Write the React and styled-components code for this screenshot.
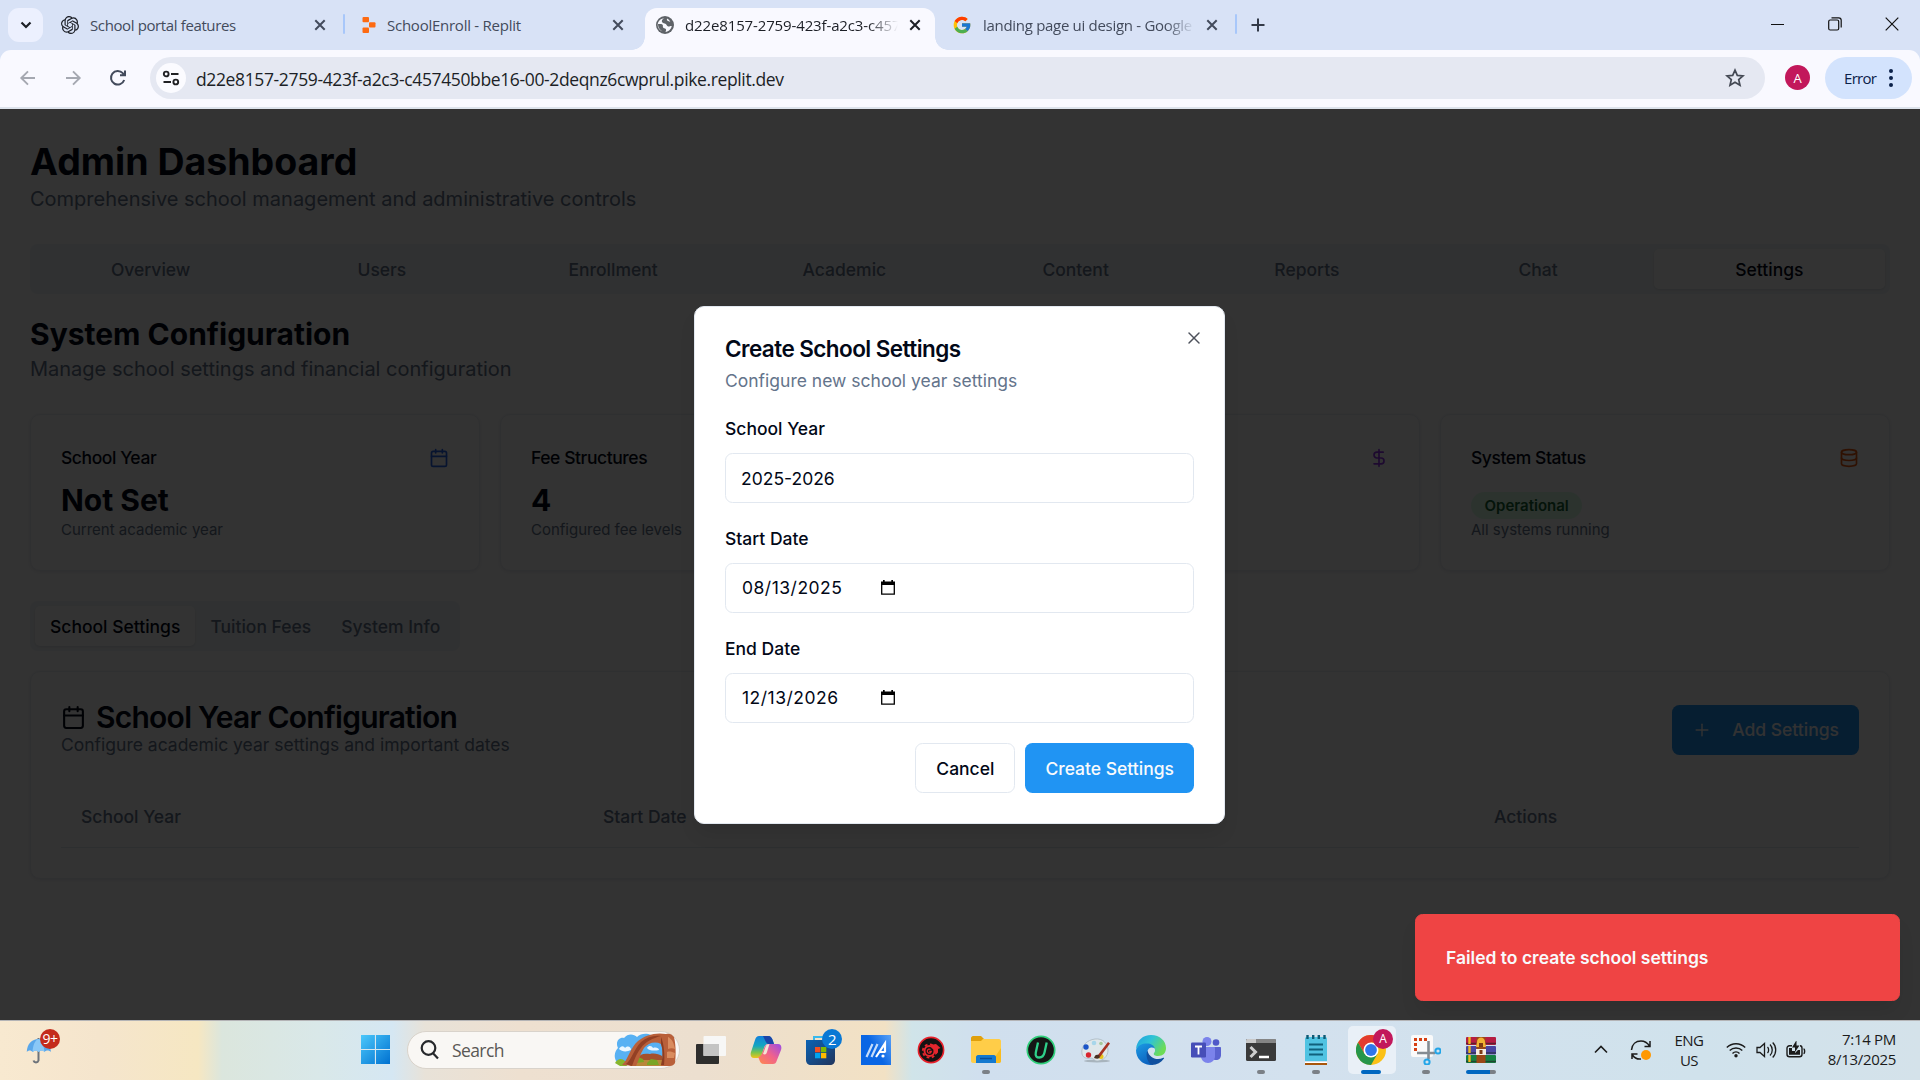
import React from "react";
import styled, { createGlobalStyle, css } from "styled-components";
import { Calendar, DollarSign, Database, Plus, X } from "lucide-react";
import { SiOpenai } from "react-icons/si";
import { FcGoogle } from "react-icons/fc";

const GlobalStyle = createGlobalStyle`
  *, *::before, *::after { box-sizing: border-box; }
  body { margin: 0; overflow: hidden; }
  h1, h2, h3, p { margin: 0; font-weight: inherit; }
  button { font: inherit; border: 0; padding: 0; background: none; color: inherit; }
  svg { display: block; flex: none; }
`;

const system = `"Open Sans", "Noto Sans", sans-serif`;

const Desktop = styled.div`
  width: 1920px;
  height: 1080px;
  display: flex;
  flex-direction: column;
  overflow: hidden;
  font-family: Inter, "Liberation Sans", sans-serif;
`;

/* ---------- browser chrome ---------- */

const TabStrip = styled.header`
  height: 50px;
  flex: none;
  display: flex;
  align-items: flex-end;
  background: #d8e2f6;
  font-family: ${system};
`;

const TabSearch = styled.button`
  width: 35px;
  height: 34px;
  margin: 0 7px 8px 8px;
  border-radius: 11px;
  background: #ecf0fe;
  display: grid;
  place-items: center;
`;

const Tab = styled.div`
  position: relative;
  height: 42px;
  padding: 0 ${(p) => p.$right || 11}px 8px ${(p) => p.$left || 11}px;
  width: ${(p) => p.$width}px;
  display: flex;
  align-items: center;
  gap: 11px;
  font-size: 15px;
  color: ${(p) => (p.$active ? "#1c1f26" : "#434b5c")};
  ${(p) =>
    p.$active &&
    css`
      margin-left: 10px;
      background: #f9f9ff;
      border-radius: 12px 12px 0 0;
      &::before,
      &::after {
        content: "";
        position: absolute;
        bottom: 0;
        width: 13px;
        height: 13px;
      }
      &::before {
        left: -13px;
        background: radial-gradient(circle at 0 0, transparent 12.5px, #f9f9ff 13px);
      }
      &::after {
        right: -13px;
        background: radial-gradient(circle at 100% 0, transparent 12.5px, #f9f9ff 13px);
      }
    `}
`;

const TabLabel = styled.span`
  flex: 1;
  min-width: 0;
  white-space: nowrap;
  letter-spacing: ${(p) => p.$track || 0}px;
  ${(p) =>
    p.$fade &&
    css`
      mask-image: linear-gradient(90deg, #000 calc(100% - 30px), transparent);
    `}
`;

const Divider = styled.span`
  width: 2px;
  height: 20px;
  margin: 0 ${(p) => p.$right}px 16px ${(p) => p.$left}px;
  border-radius: 1px;
  background: #a8c7fa;
`;

const NewTab = styled.button`
  margin: 0 0 18px 14px;
`;

const WindowButtons = styled.div`
  margin-left: auto;
  height: 50px;
  display: flex;
`;

const WindowButton = styled.button`
  width: 57px;
  height: 48px;
  display: grid;
  place-items: center;
`;

const ToolbarBack = styled.div`
  background: #d8e2f6;
  flex: none;
`;

const Toolbar = styled.div`
  height: 59px;
  padding: 0 8px 2px 18px;
  display: flex;
  align-items: center;
  background: #f9f9ff;
  border-radius: 11px 11px 0 0;
  border-bottom: 2px solid #dde3ec;
  font-family: ${system};
`;

const NavButtons = styled.div`
  width: 132px;
  display: flex;
  gap: 25px;
`;

const Omnibox = styled.div`
  width: 1615px;
  height: 42px;
  padding: 0 20px 0 6px;
  border-radius: 21px;
  background: #e5e8f2;
  display: flex;
  align-items: center;
`;

const SiteInfo = styled.span`
  width: 30px;
  height: 30px;
  border-radius: 50%;
  background: #fbfbff;
  display: grid;
  place-items: center;
`;

const Url = styled.span`
  flex: 1;
  margin-left: 10px;
  padding-top: 2px;
  font-size: 17.5px;
  letter-spacing: -0.37px;
  color: #1c1f26;
`;

const Profile = styled.span`
  width: 25px;
  height: 25px;
  margin: 0 15px 0 20px;
  border-radius: 50%;
  background: #c2185b;
  color: #fff;
  font-size: 13px;
  display: grid;
  place-items: center;
`;

const ErrorPill = styled.button`
  width: 87px;
  height: 42px;
  padding: 0 19px 0 19px;
  border-radius: 21px;
  background: #d3e3fd;
  color: #0b2149;
  font-size: 15px;
  letter-spacing: -0.7px;
  display: flex;
  align-items: center;
  justify-content: space-between;
`;

/* ---------- web page ---------- */

const Viewport = styled.main`
  position: relative;
  height: 911px;
  flex: none;
  padding: 30px;
  overflow: hidden;
  background: #fcfcfd;
  color: #020817;
`;

const PageTitle = styled.h1`
  font-size: 37.5px;
  line-height: 45px;
  font-weight: 700;
`;

const SectionTitle = styled.h2`
  font-size: 30px;
  line-height: 40px;
  font-weight: 700;
`;

const Lead = styled.p`
  font-size: 20px;
  line-height: 30px;
  color: #64748b;
`;

const MainTabs = styled.nav`
  height: 50px;
  margin: 30px 0 20px;
  padding: 5px;
  display: grid;
  grid-template-columns: repeat(8, 1fr);
  border-radius: 7.5px;
  background: #f1f5f9;
`;

const TabTrigger = styled.button`
  height: 40px;
  padding: 0 15px;
  border-radius: 5px;
  font-size: 17.5px;
  font-weight: 500;
  color: ${(p) => (p.$active ? "#020817" : "#64748b")};
  background: ${(p) => (p.$active ? "#fff" : "transparent")};
  box-shadow: ${(p) => (p.$active ? "0 1px 3px rgba(0,0,0,.1)" : "none")};
`;

const StatGrid = styled.section`
  margin: 30px 0;
  display: grid;
  grid-template-columns: repeat(4, 1fr);
  gap: 20px;
`;

const Card = styled.article`
  padding: 30px;
  min-height: ${(p) => p.$height}px;
  border: 1px solid #ecf0f5;
  border-radius: 10px;
  background: #fdfdfe;
  box-shadow: 0 1px 3px rgba(0, 0, 0, 0.07);
`;

const CardHead = styled.div`
  display: flex;
  height: 25px;
  margin-bottom: 10px;
  align-items: center;
  justify-content: space-between;
  font-size: 17.5px;
  font-weight: 500;
  color: #020817;
  letter-spacing: -0.43px;
`;

const CardValue = styled.div`
  height: 40px;
  font-size: 30px;
  line-height: 40px;
  font-weight: 700;
  display: flex;
  align-items: flex-end;
`;

const CardNote = styled.p`
  font-size: 15px;
  line-height: 20px;
  color: #64748b;
`;

const Badge = styled.span`
  margin-bottom: 1px;
  padding: 3.5px 13.5px;
  border-radius: 14px;
  font-size: 15px;
  line-height: 20px;
  font-weight: 600;
  background: #dcfce7;
  color: #166534;
`;

const SubTabs = styled.nav`
  width: max-content;
  height: 50px;
  padding: 5px;
  margin-bottom: 20px;
  display: flex;
  border-radius: 7.5px;
  background: #f1f5f9;
`;

const ConfigHead = styled.div`
  display: flex;
  align-items: center;
  justify-content: space-between;
  margin-bottom: 30px;
`;

const ConfigTitle = styled.h3`
  display: flex;
  align-items: center;
  gap: 10px;
  font-size: 30px;
  line-height: 30px;
  font-weight: 600;
  letter-spacing: -0.75px;
`;

const ConfigText = styled.p`
  font-size: 17.5px;
  line-height: 25px;
  color: #64748b;
`;

const Button = styled.button`
  height: 50px;
  padding: 0 20px;
  display: flex;
  align-items: center;
  gap: 20px;
  border-radius: 7.5px;
  font-size: 17.5px;
  font-weight: 500;
  color: ${(p) => (p.$outline ? "#020817" : "#f8fafc")};
  background: ${(p) => (p.$outline ? "#fff" : "#2094f3")};
  border: ${(p) => (p.$outline ? "1px solid #e2e8f0" : "0")};
`;

const TableHead = styled.div`
  height: 61px;
  padding-bottom: 2px;
  display: grid;
  grid-template-columns: 522px 465px 426px 1fr;
  align-items: center;
  border-bottom: 1px solid #e2e8f0;
  font-size: 17.5px;
  font-weight: 500;
  color: #64748b;
`;

const HeadCell = styled.span`
  padding: 0 20px;
`;

const Overlay = styled.div`
  position: absolute;
  inset: 0;
  padding: 1px 1px 0 0;
  display: grid;
  place-items: center;
  background: rgba(0, 0, 0, 0.8);
`;

const Dialog = styled.section`
  position: relative;
  width: 531px;
  height: 518px;
  padding: 31px 30px 30px;
  display: flex;
  flex-direction: column;
  gap: 20px;
  border: 1px solid #e2e8f0;
  border-radius: 10px;
  background: #fff;
  box-shadow: 0 12px 19px -4px rgba(0, 0, 0, 0.1);
`;

const DialogClose = styled.button`
  position: absolute;
  top: 21px;
  right: 20px;
  opacity: 0.7;
`;

const DialogTitle = styled.h2`
  margin-bottom: 7.5px;
  font-size: 22.5px;
  line-height: 22.5px;
  font-weight: 600;
  letter-spacing: -0.56px;
`;

const Field = styled.label`
  display: flex;
  flex-direction: column;
  gap: 10px;
`;

const FieldLabel = styled.span`
  height: 30px;
  padding-top: 1px;
  font-size: 17.5px;
  line-height: 30px;
  font-weight: 500;
`;

const Control = styled.span`
  height: 50px;
  padding: 0 15px ${(p) => (p.$date ? 2 : 0)}px;
  display: flex;
  align-items: center;
  border: 1px solid #e2e8f0;
  border-radius: 7.5px;
  font-size: 17.5px;
`;

const DateText = styled.span`
  width: 139px;
  padding-left: 1px;
  letter-spacing: 0.5px;
`;

const DialogFooter = styled.footer`
  display: flex;
  justify-content: flex-end;
  gap: 10px;
`;

const Toast = styled.div`
  position: absolute;
  right: 20px;
  bottom: 19px;
  width: 485px;
  height: 87px;
  padding: 30px;
  border: 1px solid #ef4444;
  border-radius: 7.5px;
  background: #ef4444;
  color: #f8fafc;
  font-size: 17.5px;
  line-height: 25px;
  font-weight: 600;
  box-shadow: 0 12px 19px -4px rgba(0, 0, 0, 0.1);
`;

/* ---------- taskbar ---------- */

const Taskbar = styled.footer`
  height: 60px;
  flex: none;
  padding-bottom: 2px;
  display: flex;
  align-items: center;
  border-top: 1px solid #b4b4b6;
  background: linear-gradient(
    90deg,
    #f8e9d0 0,
    #f5e5cd 100px,
    #f6e7c2 198px,
    #dbe6dd 222px,
    #d9e8e9 320px,
    #d5e7f3 392px,
    #e8e2d8 425px,
    #eee0d0 520px,
    #ecdfcf 700px,
    #f2e1c4 885px,
    #d0e4e9 912px,
    #d0dfee 980px,
    #d3e1ee 1300px,
    #d0e2ec 1700px,
    #d4e2ea 1920px
  );
  font-family: ${system};
  color: #1b1b1b;
`;

const Widgets = styled.div`
  position: relative;
  width: 361px;
  height: 30px;
  padding-left: 26px;
`;

const CountBadge = styled.span`
  position: absolute;
  left: ${(p) => p.$left}px;
  top: ${(p) => p.$top}px;
  width: 20px;
  height: 20px;
  border-radius: 50%;
  background: ${(p) => p.$color};
  color: #fff;
  font-size: ${(p) => p.$size || 14}px;
  line-height: 20px;
  text-align: center;
  letter-spacing: -0.5px;
`;

const SearchBox = styled.div`
  width: 273px;
  height: 38px;
  margin: 0 3px 0 17px;
  padding: 0 3px 0 12px;
  display: flex;
  align-items: center;
  gap: 13px;
  border-radius: 19px;
  background: #f9f7f4;
  border: 1px solid #d9d3cb;
  font-size: 17.5px;
  color: #5a5855;
`;

const SearchText = styled.span`
  flex: 1;
  letter-spacing: -0.6px;
`;

const AppSlot = styled.div`
  position: relative;
  width: 55.07px;
  height: 60px;
  display: grid;
  place-items: center;
  &::before {
    content: "";
    position: absolute;
    inset: 6px 3px 6px 4px;
    border-radius: 5px;
    background: ${(p) => (p.$focused ? "#e9f0f7" : "transparent")};
  }
  & > svg {
    position: relative;
  }
`;

const RunMark = styled.i`
  position: absolute;
  bottom: 6px;
  left: calc(50% - ${(p) => p.$width / 2}px);
  width: ${(p) => p.$width}px;
  height: 4px;
  border-radius: 2px;
  background: ${(p) => {
    if (p.$width > 25) return "linear-gradient(90deg, #0067c0 24px, #7b8086 24px)";
    return p.$width > 10 ? "#0067c0" : "#7b8086";
  }};
`;

const Tray = styled.div`
  margin-left: auto;
  padding-right: 24px;
  display: flex;
  align-items: center;
  font-size: 15px;
  line-height: 20px;
`;

const TrayItem = styled.span`
  margin-left: ${(p) => p.$left}px;
`;

const Language = styled.span`
  width: 32px;
  margin-left: 21px;
  text-align: center;
  letter-spacing: -0.5px;
`;

const Clock = styled.time`
  width: 76px;
  margin-left: 14px;
  padding-bottom: 2px;
  white-space: nowrap;
  display: flex;
  flex-direction: column;
  align-items: flex-end;
  letter-spacing: -0.3px;
`;

/* ---------- drawings ---------- */

const CloseGlyph = ({ color = "#434b5c" }) => (
  <svg width="12" height="12" viewBox="0 0 12 12" stroke={color} strokeWidth="2">
    <path d="M1.3 1.3 10.7 10.7M10.7 1.3 1.3 10.7" />
  </svg>
);

const ReplitMark = () => (
  <svg width="14" height="18" viewBox="0 0 14 18" fill="#fd6a12">
    <rect x="0.5" y="1" width="6.5" height="5.3" rx="1" />
    <rect x="7" y="6.3" width="6.5" height="5.3" rx="1" />
    <rect x="0.5" y="11.6" width="6.5" height="5.3" rx="1" />
  </svg>
);

const Globe = () => (
  <svg width="18" height="18" viewBox="0 0 18 18">
    <circle cx="9" cy="9" r="9" fill="#5f6368" />
    <path
      d="M8.500 2.200C6 3 5.500 4.500 6 6c.8 1.500 2.500 1.300 3.800 2 1.200.8 1 2.200 2.400 2.500 1.300.2 2-.7 3.600-.5-.6 3-3 5.600-6.300 6 .3-1.200 1-2 .3-3-.8-1-2.300-.6-2.800-1.800-.5-1.300.4-2-.7-2.700C5 7.800 3.500 8.300 2 8 1.900 11 3.500 14 6.500 15.500 4 14.500 1.500 12 1.700 8.500 2 5 5 2.200 8.500 2.200Z"
      fill="#f9f9ff"
    />
    <path d="M11 2.500c-.5 1.500.3 2.500 1.800 2.700 1 .1 1.300.6 1.700 1.300-.6-1.800-1.800-3.200-3.500-4Z" fill="#f9f9ff" />
  </svg>
);

const Tune = () => (
  <svg width="18" height="18" viewBox="0 0 18 18" fill="none" stroke="#202124" strokeWidth="1.9">
    <circle cx="4.200" cy="5" r="2.400" />
    <path d="M9 5h7.500M1.500 13H9" />
    <circle cx="13.800" cy="13" r="2.400" />
  </svg>
);

const Umbrella = () => (
  <svg width="28" height="30" viewBox="0 0 28 30">
    <path d="M12.500 3v1.500M12.500 15v10.500a2.600 2.600 0 0 1-5 0" fill="none" stroke="#6d737b" strokeWidth="2" />
    <path d="M.8 17C1 9 6 4 12.500 4S24.500 9 25 17c-2-2-5-2-6.500 0-1.500-2-4-2-6 0-1.500-2-4-2-6 0-1.500-2-4-2-5.700 0Z" fill="#5aa7ea" />
    <path d="M6.500 17C7 10 9 5 12.500 4c3 1 5.500 6 6 13-1.500-2-4-2-6 0-1.500-2-4-2-6 0Z" fill="#8ac8f7" />
  </svg>
);

const WindowsLogo = () => (
  <svg width="29" height="29" viewBox="0 0 29 29">
    <defs>
      <linearGradient id="win" x1="0" y1="0" x2="1" y2="1" gradientUnits="objectBoundingBox">
        <stop offset="0" stopColor="#4bc8fb" />
        <stop offset="1" stopColor="#0071d0" />
      </linearGradient>
      <mask id="panes">
        <path d="M0 0h13.900v13.900H0zM15 0h14v13.900H15zM0 15h13.900v14H0zM15 15h14v14H15z" fill="#fff" />
      </mask>
    </defs>
    <rect width="29" height="29" fill="url(#win)" mask="url(#panes)" />
  </svg>
);

const ArchScene = () => (
  <svg width="62" height="34" viewBox="0 0 62 34">
    <path d="M2 28C-1 22 2 17 4 15 1 9 5 4 10 5 14 0 20 1 23 4 27 0 33 0 37 2L50 4V32H8Z" fill="#58b1f3" />
    <path d="M5 16c2-4 5-3 6-1 3-3 6-1 6 2-4 2-9 2-12-1ZM33 15c2-3 5-2 6 0 3-1 6 0 6 2-4 1-10 1-12-2Z" fill="#eaf6ff" />
    <path d="M1 30c3-5 7-5 10-2l2 5H6Z" fill="#86b52d" />
    <path d="M15 33c8-7 22-8 34-7v7Z" fill="#b9873a" />
    <path d="M24 25c2-4 6-5 12-4 4-1 9 0 12 2v4H24Z" fill="#a4502d" />
    <path d="M21 28l3-4 5 2 1 3-8 1ZM33 30l4-4 6 1 2 5H33Z" fill="#7aa526" />
    <path
      d="M8 32C14 27 16 15 24 8 31 2 42-1 52 1c3-1 6 0 8 3 2 8 2 18 1 26-1 2-3 3-5 3H47c2-8 2-16 0-22-6-3-13-1-17 4-4 6-5 12-8 18Z"
      fill="#b9603a"
    />
    <path d="M12 31C18 26 20 16 27 9 33 4 40 2 47 3 39 5 31 9 27 15 22 21 20 28 18 33Z" fill="#934024" />
    <path d="M47 4c3 7 4 18 3 28h-3c2-8 2-16 0-21Z" fill="#8b3d22" />
    <path d="M54 4c4 2 6 6 7 12-2-1-5-1-7 0ZM53 19c3-1 5 0 8 1l-1 5h-7Z" fill="#d98c5f" />
  </svg>
);

const TaskView = () => (
  <svg width="30" height="30" viewBox="0 0 30 30">
    <rect x="0" y="9" width="23" height="20" rx="1" fill="#2e2e2d" />
    <rect x="7.500" y="1" width="22.500" height="20" rx="1" fill="#f7f7f6" />
    <rect x="7.500" y="9" width="15.500" height="12" fill="#c4c4c3" />
  </svg>
);

const Copilot = () => (
  <svg width="32" height="30" viewBox="0 0 32 30">
    <defs>
      <linearGradient id="cpA" x1="0" y1="0" x2="0" y2="1">
        <stop offset="0" stopColor="#1380dc" />
        <stop offset=".45" stopColor="#13a6c0" />
        <stop offset=".75" stopColor="#7cc44c" />
        <stop offset="1" stopColor="#f2c419" />
      </linearGradient>
      <linearGradient id="cpB" x1="1" y1="0" x2="0" y2="1">
        <stop offset="0" stopColor="#9b4be6" />
        <stop offset=".5" stopColor="#f0628c" />
        <stop offset="1" stopColor="#ff8a4c" />
      </linearGradient>
    </defs>
    <path d="M9 1h9c3 0 4 2 5 5l1 3h-6c-2 0-3 1-4 4l-2 6c-1 3-2 4-5 4H4c-3 0-4-3-3-6L5 5C6 2 7 1 9 1Z" fill="url(#cpA)" />
    <path d="M13 1h5c3 0 4 2 5 5l1 3h-6c-2-1-3-4-5-8Z" fill="#1b45a8" />
    <path d="M23 29h-9c-3 0-4-2-5-5l-.8-2c2-.4 3-1.500 4-4l2-5c1-3 2-4 4.500-4H28c3 0 4 3 3 6l-4 10c-1 3-2 4-4 4Z" fill="url(#cpB)" />
    <path d="m13 19 2.500-7c.6-1.800 1.500-3 4-3l-2.500 8c-.6 2-1.500 3-4 2Z" fill="#f6e3d3" />
  </svg>
);

const Store = () => (
  <svg width="30" height="30" viewBox="0 0 30 30">
    <defs>
      <linearGradient id="bag" x1="0" y1="0" x2="1" y2="1">
        <stop offset="0" stopColor="#0b63b4" />
        <stop offset="1" stopColor="#21345c" />
      </linearGradient>
    </defs>
    <path d="M8 7V2h14v5" fill="none" stroke="#39b9ec" strokeWidth="2" />
    <path d="M0 5h29v20c0 3-2 5-5 5H5c-3 0-5-2-5-5Z" fill="url(#bag)" />
    <path d="M9 12h5.300v5.300H9z" fill="#f25022" />
    <path d="M15 12h5.300v5.300H15z" fill="#7fba00" />
    <path d="M9 18h5.300v5.300H9z" fill="#00a4ef" />
    <path d="M15 18h5.300v5.300H15z" fill="#ffb900" />
  </svg>
);

const MyAsus = () => (
  <svg width="30" height="30" viewBox="0 0 30 30">
    <defs>
      <linearGradient id="asus" x1="1" y1="0" x2="0" y2=".6">
        <stop offset="0" stopColor="#5aa2f7" />
        <stop offset=".6" stopColor="#0a66e4" />
      </linearGradient>
    </defs>
    <path d="M0 0h30v30H0z" fill="url(#asus)" />
    <path d="m5.500 22 6-13M10.500 22l6-13" stroke="#c4dcfb" strokeWidth="2.200" />
    <path d="m15 22 9-13.500v9M19 17h5" fill="none" stroke="#fff" strokeWidth="2.200" />
    <circle cx="22" cy="21" r="1.600" fill="#fff" />
  </svg>
);

const RedGear = () => (
  <svg width="28" height="28" viewBox="0 0 28 28">
    <circle cx="14" cy="14" r="12.600" fill="#141313" stroke="#e8202a" strokeWidth="1.600" />
    <circle cx="12.500" cy="15" r="5" fill="none" stroke="#e5262e" strokeWidth="2" />
    <circle cx="12.500" cy="15" r="6.700" fill="none" stroke="#e5262e" strokeWidth="1.800" strokeDasharray="2.800 2.500" />
    <path d="M13.500 13.500a2 2 0 1 0 .8 2h-2" fill="none" stroke="#e5262e" strokeWidth="1.300" />
    <path d="m14 9 2-.5 3-.5 4.500 4-2.500 1v3.500l-2.500 2.500-1-5-3-2Z" fill="#e5262e" />
  </svg>
);

const Explorer = () => (
  <svg width="30" height="28" viewBox="0 0 30 28">
    <path d="M0 2C0 1 1 0 2 0h8l3 3v4H0Z" fill="#e0a00c" />
    <path d="M0 5h10l2-2h16c1 0 2 1 2 2v20c0 1-1 2-2 2H2c-1 0-2-1-2-2Z" fill="#ffcd48" />
    <path d="M30 12v13c0 1-1 2-2 2h-8Z" fill="#f9bb1d" />
    <path d="M5 21c0-1 1-2 2-2h16c1 0 2 1 2 2v6H5Z" fill="#1479cf" />
    <path d="M9 22.500h12" stroke="#0a4f99" strokeWidth="1.500" />
  </svg>
);

const Uninstaller = () => (
  <svg width="30" height="30" viewBox="0 0 30 30" fill="none">
    <circle cx="15" cy="15" r="13.700" fill="#141615" stroke="#2fcf7a" strokeWidth="1.700" />
    <path d="m12 7.500-2.200 10c-.8 3.700 1 5 3.500 5s4.400-1.300 5.200-5l2.200-10" stroke="#2fd08a" strokeWidth="2.300" />
  </svg>
);

const Paint = () => (
  <svg width="30" height="28" viewBox="0 0 30 28">
    <ellipse cx="16" cy="25" rx="13" ry="1.500" fill="#a8b4bd" />
    <path d="M14 3c8-1 13 5 13 11 0 7-5 10-10 11-4 .5-4-3-7-3-4 1-8 0-9-4C-.5 10 6 4 14 3Z" fill="#dfe7ea" stroke="#a9b8c0" strokeWidth=".8" />
    <circle cx="5" cy="11" r="2.700" fill="#1b54c8" />
    <circle cx="13" cy="7" r="2.300" fill="#a8d6ea" />
    <circle cx="20" cy="7.500" r="1.800" fill="#a5c79a" />
    <circle cx="7.500" cy="19" r="2.700" fill="#d8242e" />
    <circle cx="20" cy="20.500" r="2.500" fill="#e8c51c" />
    <path d="m17 19 10-13 2 1.500L19 21Z" fill="#a73222" />
    <path d="M13 22c1-3 2-4 5-3l1 2c-1 2-3 2-6 1Z" fill="#4a3122" />
  </svg>
);

const Edge = () => (
  <svg width="30" height="30" viewBox="0 0 30 30">
    <defs>
      <linearGradient id="edTop" x1="0" y1="0" x2="1" y2=".5">
        <stop offset="0" stopColor="#1f9fe0" />
        <stop offset=".5" stopColor="#2fc3d6" />
        <stop offset="1" stopColor="#6ddc55" />
      </linearGradient>
      <linearGradient id="edLeft" x1="0" y1="0" x2=".5" y2="1">
        <stop offset="0" stopColor="#1c9be4" />
        <stop offset="1" stopColor="#0b62bf" />
      </linearGradient>
    </defs>
    <path d="M0 14C1 5 7 0 15 0c9 0 15 6 15 13 0 5-3 8-8 8-3 0-5-1-4-3 1-1 1-2 1-3 0-3-3-5-7-5-6 0-10 2-12 4Z" fill="url(#edTop)" />
    <path d="M0 15c2-5 6-6.500 11-6.500 4 0 7 2 8 5-2-1.500-5-1.500-6.500.5C10 17 11 24 18 27.500c-1 2-2 2.500-4 2.500C6 29.500 0 23 0 15Z" fill="url(#edLeft)" />
    <path d="M11.500 15.500C9 21 12 28 16 30c5-.2 9-2.500 12-6.500.3-.6-.2-.9-.7-.7C21 26 13 23 11.500 15.500Z" fill="#10509f" />
  </svg>
);

const Teams = () => (
  <svg width="30" height="28" viewBox="0 0 30 28">
    <circle cx="16" cy="5.500" r="4.500" fill="#7b83eb" />
    <circle cx="25" cy="6.500" r="3.300" fill="#5059c9" />
    <path d="M21 11h8c.6 0 1 .5 1 1v7c0 3-2 5-5 5s-4-2-4-5Z" fill="#5a63d0" />
    <path d="M10 11h13c.6 0 1 .5 1 1v8c0 4-3 7-7 7s-7-3-7-7Z" fill="#7b83eb" />
    <rect x="0" y="6.500" width="15" height="15" rx="1.200" fill="#464eb8" />
    <path d="M4 10.500h7M7.500 10.500v8" stroke="#fff" strokeWidth="1.800" />
  </svg>
);

const Terminal = () => (
  <svg width="30" height="22" viewBox="0 0 30 22">
    <rect width="30" height="22" rx="1.500" fill="#3a3a3a" />
    <path d="M1.500 0h27C29 0 30 .7 30 1.500V4H0V1.500C0 .7 1 0 1.500 0Z" fill="#858585" />
    <path d="M0 1.500C0 .7 1 0 1.500 0H10v4H0Z" fill="#c9c9c9" />
    <path d="m4.500 8 5 5-5 5" fill="none" stroke="#cfcfcf" strokeWidth="3" />
    <path d="M13 18h10" stroke="#fff" strokeWidth="2.500" />
  </svg>
);

const Notepad = () => (
  <svg width="24" height="30" viewBox="0 0 24 30">
    <path d="M1 3.500C1 2.500 2 2 3 2h18c1 0 2 .5 2 1.500V26H1Z" fill="#50c3e2" />
    <path d="M1 27h22v1.200H1z" fill="#fff" />
    <path d="M1 28h22v2H1z" fill="#a8560c" />
    <path d="M5 9.500h14M5 14.500h14M5 19.500h14" stroke="#10617c" strokeWidth="1.800" />
    <path d="M3.500 0v4M9.200 0v4M14.800 0v4M20.500 0v4" stroke="#0d5a75" strokeWidth="2.400" />
  </svg>
);

const Chrome = () => (
  <svg width="30" height="30" viewBox="0 0 30 30">
    <circle cx="15" cy="15" r="15" fill="#fbc116" />
    <path d="M2 7.500A15 15 0 0 1 28 7.500H15L8.500 18.700Z" fill="#e33b2e" />
    <path d="M2 7.500A15 15 0 0 0 15 30l6.500-11.300-13 0Z" fill="#27964a" />
    <circle cx="15" cy="15" r="7.500" fill="#fff" />
    <circle cx="15" cy="15" r="5.900" fill="#2f76ea" />
  </svg>
);

const Snip = () => (
  <svg width="30" height="30" viewBox="0 0 30 30">
    <rect x="0" y="0" width="22" height="22" rx="2" fill="#fafafa" />
    <path d="M3 4.500h13" stroke="#d63f12" strokeWidth="3" strokeDasharray="3 2" />
    <path d="M4.500 3v13" stroke="#d63f12" strokeWidth="3" strokeDasharray="3 2" />
    <path d="M17.500 6v18M6 18h18" stroke="#858c92" strokeWidth="2.600" />
    <circle cx="27" cy="16" r="2.600" fill="none" stroke="#22a5e8" strokeWidth="2" />
    <circle cx="16" cy="27" r="2.600" fill="none" stroke="#22a5e8" strokeWidth="2" />
  </svg>
);

const WinRar = () => (
  <svg width="30" height="28" viewBox="0 0 30 28">
    <rect y="1" width="30" height="8" rx="1" fill="#b51d42" />
    <rect y="10" width="30" height="8.500" rx="1" fill="#4a45a0" />
    <rect y="19" width="30" height="8" rx="1" fill="#168043" />
    <path d="M0 7.500h30M0 17h30M0 25.500h30" stroke="#242124" strokeOpacity=".6" strokeWidth="1.600" />
    <path d="M3.500 1v26" stroke="#f0b91e" strokeWidth="2.400" strokeDasharray="7 2" />
    <path d="M10.500 1h9v26h-9z" fill="#9a4716" />
    <path d="M11 6c0-6 8-6 8 0l1 5H10Z" fill="#f2b233" />
    <path d="M10 13h10v6H10z" fill="#f5ede0" />
    <path d="M13 7h4v4h-4zM13.500 14h3v4h-3z" fill="#7d3a15" />
  </svg>
);

const apps = [
  { id: "taskview", icon: <TaskView /> },
  { id: "copilot", icon: <Copilot /> },
  { id: "store", icon: <Store />, badge: { text: "2", color: "#0a78d4", left: 29, top: 9, size: 15 } },
  { id: "asus", icon: <MyAsus /> },
  { id: "gear", icon: <RedGear /> },
  { id: "explorer", icon: <Explorer />, mark: 8 },
  { id: "uninstaller", icon: <Uninstaller /> },
  { id: "paint", icon: <Paint /> },
  { id: "edge", icon: <Edge /> },
  { id: "teams", icon: <Teams /> },
  { id: "terminal", icon: <Terminal />, mark: 8 },
  { id: "notepad", icon: <Notepad />, mark: 8 },
  { id: "chrome", icon: <Chrome />, mark: 20, focused: true, badge: { text: "A", color: "#c2185b", left: 29, top: 9, size: 12 } },
  { id: "snip", icon: <Snip />, mark: 8 },
  { id: "winrar", icon: <WinRar />, mark: 30 },
];

const mainTabs = ["Overview", "Users", "Enrollment", "Academic", "Content", "Reports", "Chat", "Settings"];
const subTabs = ["School Settings", "Tuition Fees", "System Info"];

const CalendarPicker = () => (
  <svg width="16" height="17" viewBox="0 0 16 17">
    <path d="M1.700 5h12.600v10.200H1.700z" fill="none" stroke="#000" strokeWidth="1.300" />
    <path d="M1 2.500h14V6H1zM3 1h1.700v2H3zM11.300 1H13v2h-1.700z" />
  </svg>
);

function BrowserChrome() {
  return (
    <>
      <TabStrip>
        <TabSearch>
          <svg width="12" height="8" viewBox="0 0 12 8" fill="none" stroke="#1c1f26" strokeWidth="2.200">
            <path d="m1.500 1.500 4.500 4.500 4.500-4.500" />
          </svg>
        </TabSearch>
        <Tab $width={287}>
          <SiOpenai size={18} color="#1c1f26" />
          <TabLabel $track={-0.38}>School portal features</TabLabel>
          <CloseGlyph />
        </Tab>
        <Divider $left={6} $right={6} />
        <Tab $width={284}>
          <ReplitMark />
          <TabLabel $track={-0.25}>SchoolEnroll - Replit</TabLabel>
          <CloseGlyph />
        </Tab>
        <Tab $width={290} $active $right={14}>
          <Globe />
          <TabLabel $fade $track={-0.13}>d22e8157-2759-423f-a2c3-c457</TabLabel>
          <CloseGlyph color="#1c1f26" />
        </Tab>
        <Tab $width={297} $left={17} $right={14}>
          <FcGoogle size={20} />
          <TabLabel $fade $track={-0.3}>landing page ui design - Google</TabLabel>
          <CloseGlyph />
        </Tab>
        <Divider $left={3} $right={0} />
        <NewTab>
          <svg width="14" height="14" viewBox="0 0 14 14" stroke="#333a48" strokeWidth="2">
            <path d="M7 .5v13M.5 7h13" />
          </svg>
        </NewTab>
        <WindowButtons>
          <WindowButton>
            <svg width="13" height="13" viewBox="0 0 13 13" stroke="#111">
              <path d="M0 6.500h13" />
            </svg>
          </WindowButton>
          <WindowButton>
            <svg width="14" height="14" viewBox="0 0 14 14" fill="none" stroke="#111" strokeWidth="1.200">
              <rect x=".7" y="3" width="10" height="10" rx="1.500" />
              <path d="M3.500 .8h7.200c1.500 0 2.500 1 2.500 2.500v7.200" />
            </svg>
          </WindowButton>
          <WindowButton>
            <svg width="14" height="14" viewBox="0 0 14 14" stroke="#111" strokeWidth="1.200">
              <path d="m.7.7 12.600 12.600M13.300.7.7 13.300" />
            </svg>
          </WindowButton>
        </WindowButtons>
      </TabStrip>
      <ToolbarBack>
        <Toolbar>
          <NavButtons>
            <svg width="20" height="20" viewBox="0 0 20 20" fill="none" stroke="#a5a8b1" strokeWidth="1.900">
              <path d="M17 10H3.500M10 3.300 3.300 10l6.700 6.700" />
            </svg>
            <svg width="20" height="20" viewBox="0 0 20 20" fill="none" stroke="#a5a8b1" strokeWidth="1.900">
              <path d="M3 10h13.500M10 3.300l6.700 6.700-6.700 6.700" />
            </svg>
            <svg width="20" height="20" viewBox="0 0 20 20" fill="none" stroke="#434b5c" strokeWidth="2">
              <path d="M16.200 12a6.800 6.800 0 1 1-1.400-6.800L16.700 7M17 2.500V7.300h-5" />
            </svg>
          </NavButtons>
          <Omnibox>
            <SiteInfo>
              <Tune />
            </SiteInfo>
            <Url>d22e8157-2759-423f-a2c3-c457450bbe16-00-2deqnz6cwprul.pike.replit.dev</Url>
            <svg width="20" height="20" viewBox="0 0 20 20" fill="none" stroke="#444954" strokeWidth="1.700">
              <path d="m10 2.200 2.300 5.200 5.700.5-4.300 3.700 1.300 5.600-5-3-5 3 1.300-5.600L2 7.900l5.700-.5Z" />
            </svg>
          </Omnibox>
          <Profile>A</Profile>
          <ErrorPill>
            Error
            <svg width="4" height="20" viewBox="0 0 4 20" fill="#0b2149">
              <circle cx="2" cy="3" r="2" />
              <circle cx="2" cy="10" r="2" />
              <circle cx="2" cy="17" r="2" />
            </svg>
          </ErrorPill>
        </Toolbar>
      </ToolbarBack>
    </>
  );
}

function StatCard({ title, value, note, icon, children }) {
  return (
    <Card $height={157}>
      <CardHead>
        <span>{title}</span>
        {icon}
      </CardHead>
      <CardValue>{children || value}</CardValue>
      <CardNote>{note}</CardNote>
    </Card>
  );
}

function SettingsDialog() {
  return (
    <Dialog>
      <DialogClose>
        <X size={20} strokeWidth={1.7} />
      </DialogClose>
      <div>
        <DialogTitle>Create School Settings</DialogTitle>
        <ConfigText>Configure new school year settings</ConfigText>
      </div>
      <Field>
        <FieldLabel>School Year</FieldLabel>
        <Control>2025-2026</Control>
      </Field>
      <Field>
        <FieldLabel>Start Date</FieldLabel>
        <Control $date>
          <DateText>08/13/2025</DateText>
          <CalendarPicker />
        </Control>
      </Field>
      <Field>
        <FieldLabel>End Date</FieldLabel>
        <Control $date>
          <DateText>12/13/2026</DateText>
          <CalendarPicker />
        </Control>
      </Field>
      <DialogFooter>
        <Button $outline>Cancel</Button>
        <Button>Create Settings</Button>
      </DialogFooter>
    </Dialog>
  );
}

function WindowsTaskbar() {
  return (
    <Taskbar>
      <Widgets>
        <Umbrella />
        <CountBadge $left={40} $top={-6} $color="#c42b1c">9+</CountBadge>
      </Widgets>
      <WindowsLogo />
      <SearchBox>
        <svg width="19" height="20" viewBox="0 0 19 20" fill="none" stroke="#26282b" strokeWidth="2.200">
          <circle cx="8.500" cy="8" r="6.800" />
          <path d="m13 13.200 5 5.300" />
        </svg>
        <SearchText>Search</SearchText>
        <ArchScene />
      </SearchBox>
      {apps.map((app) => (
        <AppSlot key={app.id} $focused={app.focused}>
          {app.icon}
          {app.badge && (
            <CountBadge $left={app.badge.left} $top={app.badge.top} $color={app.badge.color} $size={app.badge.size}>
              {app.badge.text}
            </CountBadge>
          )}
          {app.mark && <RunMark $width={app.mark} />}
        </AppSlot>
      ))}
      <Tray>
        <svg width="14" height="9" viewBox="0 0 14 9" fill="none" stroke="#1b1b1b" strokeWidth="1.600">
          <path d="m1 7.500 6-6 6 6" />
        </svg>
        <TrayItem $left={22}>
          <svg width="22" height="22" viewBox="0 0 22 22" fill="none" stroke="#1b1b1b" strokeWidth="1.500">
            <path d="M1.500 11C2 5 6 2 11 2c4 0 6.500 2 8.500 5M20 2v5.500h-5.500M2 20v-5h5.500M2.500 16c2 3 5 4.500 8.500 4" />
            <circle cx="16" cy="16" r="5" fill="#ff9800" stroke="none" />
          </svg>
        </TrayItem>
        <Language>ENG US</Language>
        <TrayItem $left={21}>
          <svg width="20" height="16" viewBox="0 0 20 16" fill="none" stroke="#1b1b1b" strokeWidth="1.400">
            <path d="M.8 5.500a13 13 0 0 1 18.400 0M3.700 8.500a9 9 0 0 1 12.600 0M6.500 11.400a5 5 0 0 1 7 0" />
            <circle cx="10" cy="13.800" r="1.700" fill="#1b1b1b" stroke="none" />
          </svg>
        </TrayItem>
        <TrayItem $left={10}>
          <svg width="21" height="18" viewBox="0 0 21 18" fill="none" stroke="#1b1b1b" strokeWidth="1.300">
            <path d="M1 6.500h3l4.500-4v13L4 11.500H1ZM11.500 6c1.500 1.500 1.500 4.500 0 6M14 3.500c3 3 3 8 0 11M16.700 1.500c4 4 4 11 0 15" />
          </svg>
        </TrayItem>
        <TrayItem $left={9}>
          <svg width="20" height="18" viewBox="0 0 20 18" fill="none" stroke="#1b1b1b" strokeWidth="1.400">
            <path d="M6 4.700H3.500c-1.500 0-2.500 1-2.500 2.500v6c0 1.500 1 2.500 2.500 2.500h10c1.500 0 2.500-1 2.500-2.500v-6c0-1.500-.8-2.500-2-2.500M17.500 8c1.500 0 1.500 4.500 0 4.500" />
            <path d="M3 7h3v3h3v2l3-3h2v4.700H3Z" fill="#1b1b1b" stroke="none" />
            <path d="m10 0-4 6.500h3V11l4.500-6.500h-3V0Z" fill="#1b1b1b" stroke="none" />
          </svg>
        </TrayItem>
        <Clock>
          <span>7:14 PM</span>
          <span>8/13/2025</span>
        </Clock>
      </Tray>
    </Taskbar>
  );
}

export default function App() {
  return (
    <Desktop>
      <GlobalStyle />
      <BrowserChrome />
      <Viewport>
        <PageTitle>Admin Dashboard</PageTitle>
        <Lead>Comprehensive school management and administrative controls</Lead>
        <MainTabs>
          {mainTabs.map((name) => (
            <TabTrigger key={name} $active={name === "Settings"}>{name}</TabTrigger>
          ))}
        </MainTabs>
        <SectionTitle>System Configuration</SectionTitle>
        <Lead>Manage school settings and financial configuration</Lead>
        <StatGrid>
          <StatCard title="School Year" value="Not Set" note="Current academic year" icon={<Calendar size={20} color="#2563eb" />} />
          <StatCard title="Fee Structures" value="4" note="Configured fee levels" />
          <StatCard icon={<DollarSign size={20} color="#9333ea" />} />
          <StatCard title="System Status" note="All systems running" icon={<Database size={20} color="#ea580c" />}>
            <Badge>Operational</Badge>
          </StatCard>
        </StatGrid>
        <SubTabs>
          {subTabs.map((name) => (
            <TabTrigger key={name} $active={name === "School Settings"}>{name}</TabTrigger>
          ))}
        </SubTabs>
        <Card $height={208}>
          <ConfigHead>
            <div>
              <ConfigTitle>
                <Calendar size={25} />
                School Year Configuration
              </ConfigTitle>
              <ConfigText>Configure academic year settings and important dates</ConfigText>
            </div>
            <Button>
              <Plus size={20} strokeWidth={1.7} />
              Add Settings
            </Button>
          </ConfigHead>
          <TableHead>
            <HeadCell>School Year</HeadCell>
            <HeadCell>Start Date</HeadCell>
            <HeadCell />
            <HeadCell>Actions</HeadCell>
          </TableHead>
        </Card>
        <Overlay>
          <SettingsDialog />
        </Overlay>
        <Toast>Failed to create school settings</Toast>
      </Viewport>
      <WindowsTaskbar />
    </Desktop>
  );
}
